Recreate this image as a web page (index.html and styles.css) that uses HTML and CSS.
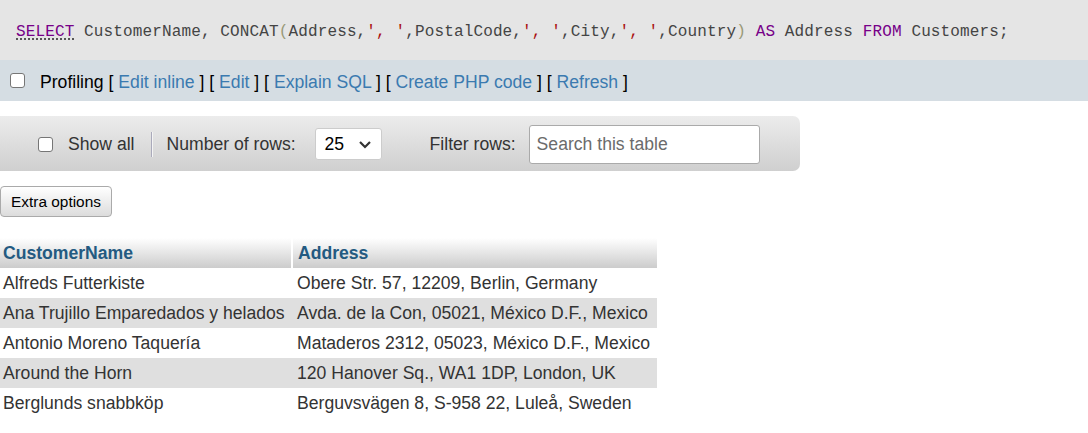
FILE: index.html
```html
<!DOCTYPE html>
<html>
<head>
<meta charset="utf-8">
<title>Query result</title>
<link rel="stylesheet" href="styles.css">
</head>
<body>
<div class="sql">
  <code><span class="kw sel">SELECT</span> CustomerName, CONCAT<span class="br">(</span>Address,<span class="str">', '</span>,PostalCode,<span class="str">', '</span>,City,<span class="str">', '</span>,Country<span class="br">)</span> <span class="kw">AS</span> Address <span class="kw">FROM</span> Customers;</code>
</div>

<div class="tools">
  <span class="cb"></span>
  <span class="prof">Profiling</span>
  <span class="links">[ <a>Edit inline</a> ] [ <a>Edit</a> ] [ <a>Explain SQL</a> ] [ <a>Create PHP code</a> ] [ <a>Refresh</a> ]</span>
</div>

<div class="nav">
  <span class="cb nav-cb"></span>
  <span class="nav-label">Show all</span>
  <span class="sep"></span>
  <span class="nav-label">Number of rows:</span>
  <span class="select"><span>25</span><svg width="14" height="9" viewBox="0 0 14 9"><path d="M2 2 L7 7 L12 2" fill="none" stroke="#333" stroke-width="2.2"/></svg></span>
  <span class="nav-label filter">Filter rows:</span>
  <span class="search">Search this table</span>
</div>

<button class="extra">Extra options</button>

<table class="data">
  <thead>
    <tr><th class="c1">CustomerName</th><th class="c2">Address</th></tr>
  </thead>
  <tbody>
    <tr><td>Alfreds Futterkiste</td><td>Obere Str. 57, 12209, Berlin, Germany</td></tr>
    <tr><td>Ana Trujillo Emparedados y helados</td><td>Avda. de la Con, 05021, México D.F., Mexico</td></tr>
    <tr><td>Antonio Moreno Taquería</td><td>Mataderos 2312, 05023, México D.F., Mexico</td></tr>
    <tr><td>Around the Horn</td><td>120 Hanover Sq., WA1 1DP, London, UK</td></tr>
    <tr><td>Berglunds snabbköp</td><td>Berguvsvägen 8, S-958 22, Luleå, Sweden</td></tr>
  </tbody>
</table>
</body>
</html>
```

FILE: styles.css
```css
html, body {
  margin: 0;
  padding: 0;
  background: #fff;
}
body {
  font-family: "Liberation Sans", Arial, sans-serif;
  font-size: 17.6px;
  color: #333;
}

.sql {
  height: 60px;
  box-sizing: border-box;
  background: #e5e5e5;
  display: flex;
  align-items: center;
  padding: 4px 0 0 16px;
}
.sql code {
  font-family: "Liberation Mono", "DejaVu Sans Mono", monospace;
  font-size: 16px;
  letter-spacing: 0.13px;
  color: #444;
  white-space: pre;
}
.sql .kw { color: #770088; }
.sql .sel {
  text-decoration: underline dotted #333;
  text-underline-offset: 3px;
}
.sql .str { color: #aa1111; }
.sql .br { color: #999977; }

.tools {
  height: 41px;
  box-sizing: border-box;
  background: #d5dde3;
  display: flex;
  align-items: center;
  padding: 0 0 0 10px;
  color: #000;
}
.tools .prof, .tools .links { padding-top: 4px; }
.cb {
  display: inline-block;
  width: 13px;
  height: 13px;
  border: 1px solid #767676;
  border-radius: 3px;
  background: #fff;
  flex: none;
}
.prof {
  margin-left: 15px;
  margin-right: 5px;
}
.links a {
  color: #3b7ab0;
  text-decoration: none;
}

.nav {
  margin-top: 15px;
  width: 800px;
  height: 55px;
  box-sizing: border-box;
  background: linear-gradient(#ececec, #cfcfcf);
  border-radius: 0 7px 7px 0;
  display: flex;
  align-items: center;
  padding: 1px 0 0 38px;
  color: #333;
}
.nav-label { margin-left: 15px; }
.sep {
  width: 1px;
  height: 25px;
  background: #aab;
  box-shadow: 1px 0 0 #f4f4f4;
  margin-left: 16px;
}
.sep + .nav-label { margin-left: 15px; }
.select {
  margin-left: 19px;
  width: 67px;
  height: 32px;
  box-sizing: border-box;
  background: #fff;
  border: 1px solid #ccc;
  border-radius: 3px;
  display: flex;
  align-items: center;
  justify-content: space-between;
  padding: 0 9px 0 9px;
  color: #000;
}
.select svg { display: block; }
.nav-label.filter { margin-left: 48px; }
.search {
  margin-left: 13px;
  width: 231px;
  height: 39px;
  box-sizing: border-box;
  background: #fff;
  border: 1px solid #aaa;
  border-radius: 3px;
  display: flex;
  align-items: center;
  padding-left: 7px;
  color: #6b6b6b;
}

.extra {
  display: block;
  margin-top: 15px;
  height: 31px;
  width: 112px;
  padding: 0;
  font-family: "Liberation Sans", Arial, sans-serif;
  font-size: 15.4px;
  color: #000;
  background: linear-gradient(#ffffff, #dcdcdc);
  border: 1px solid #aaa;
  border-radius: 4px;
}

.data {
  margin-top: 21px;
  border-collapse: collapse;
}
.data th {
  height: 30px;
  padding: 0 3px;
  text-align: left;
  font-weight: bold;
  color: #235a81;
  background: linear-gradient(#ffffff, #cccccc);
  border-right: 2px solid #fff;
  box-sizing: border-box;
}
.data th.c1 { width: 292px; }
.data th.c2 { width: 365px; border-right: none; padding-left: 5px; }
.data td {
  height: 30px;
  padding: 0 3px;
  white-space: nowrap;
}
.data td + td { padding-left: 5px; }
.data tbody tr:nth-child(even) td { background: #dfdfdf; }
```
